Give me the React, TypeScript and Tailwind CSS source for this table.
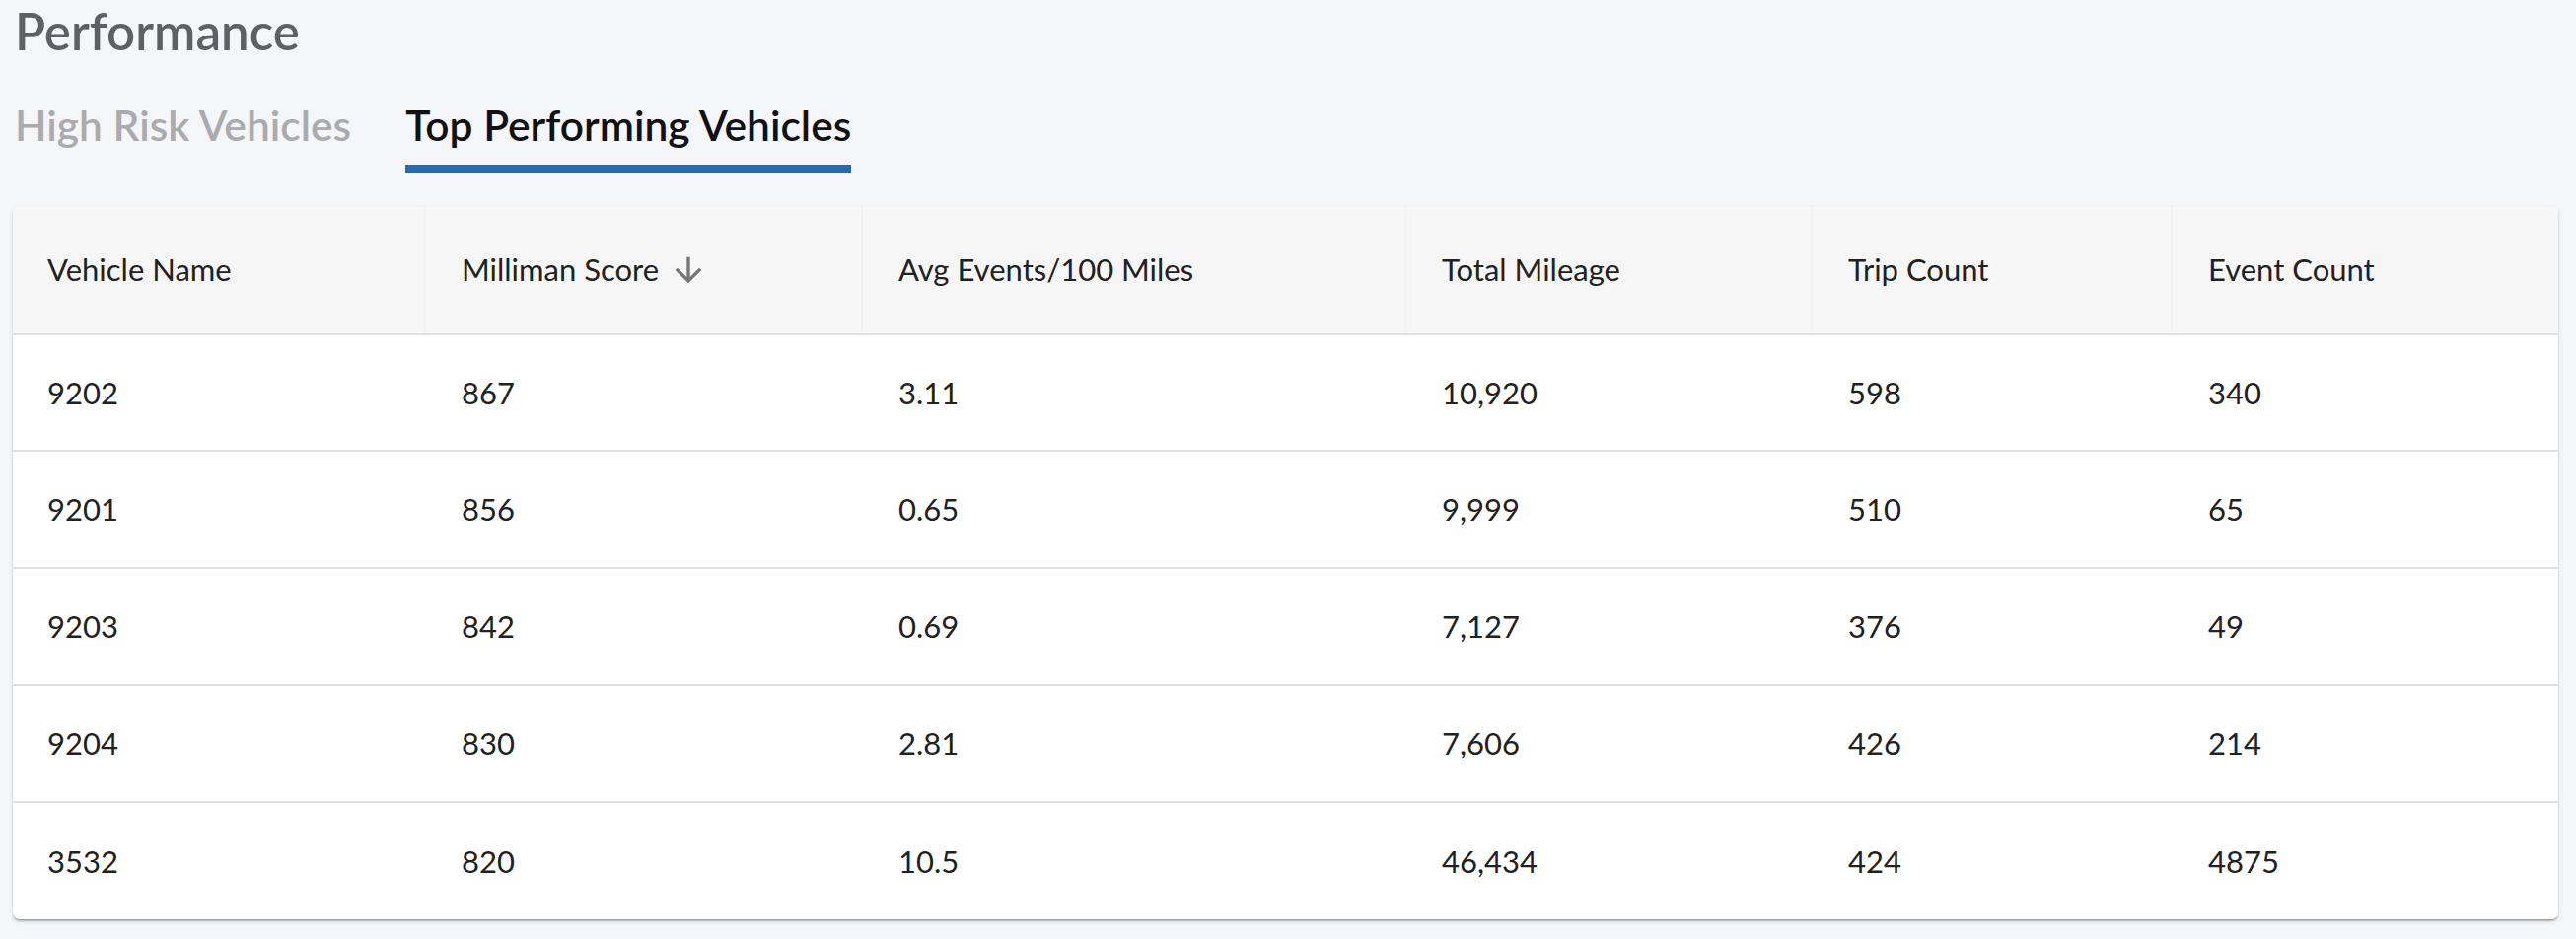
import { useState } from "react";

type Vehicle = {
  name: string;
  score: number;
  avgEvents: string;
  mileage: string;
  trips: number;
  events: number;
};

const vehicles: Vehicle[] = [
  { name: "9202", score: 867, avgEvents: "3.11", mileage: "10,920", trips: 598, events: 340 },
  { name: "9201", score: 856, avgEvents: "0.65", mileage: "9,999", trips: 510, events: 65 },
  { name: "9203", score: 842, avgEvents: "0.69", mileage: "7,127", trips: 376, events: 49 },
  { name: "9204", score: 830, avgEvents: "2.81", mileage: "7,606", trips: 426, events: 214 },
  { name: "3532", score: 820, avgEvents: "10.5", mileage: "46,434", trips: 424, events: 4875 },
];

const columns = [
  "Vehicle Name",
  "Milliman Score",
  "Avg Events/100 Miles",
  "Total Mileage",
  "Trip Count",
  "Event Count",
];

const gridCols = "grid grid-cols-[417px_443px_551px_412px_365px_1fr]";

// material "arrow_downward"
const SortArrow = () => (
  <svg viewBox="0 0 24 24" className="h-[40px] w-[40px] ml-[10px] shrink-0" fill="#757575">
    <path d="M20 12l-1.41-1.41L13 16.17V4h-2v12.17l-5.58-5.59L4 12l8 8 8-8z" />
  </svg>
);

const Tab = ({ label, active, onClick }: { label: string; active: boolean; onClick: () => void }) => (
  <button onClick={onClick} className="flex flex-col items-stretch cursor-pointer">
    <span
      className={`text-[42.5px] leading-[48px] font-semibold whitespace-nowrap ${
        active ? "text-[#111111]" : "text-[#aaabae]"
      }`}
    >
      {label}
    </span>
    <div className={`h-[8px] mt-[16px] ${active ? "bg-[#2b69ad]" : "bg-transparent"}`} />
  </button>
);

export default function App() {
  const [tab, setTab] = useState("top");

  return (
    <div className="min-h-screen bg-[#f5f6fa] pl-[13px] pr-[18px] font-['Lato',sans-serif]">
      <h1 className="pt-[2px] pl-[2px] text-[51px] leading-[60px] font-semibold text-[#5f6066]">
        Performance
      </h1>

      <div className="flex gap-[55px] mt-[41px] pl-[2px]">
        <Tab label="High Risk Vehicles" active={tab === "high"} onClick={() => setTab("high")} />
        <Tab label="Top Performing Vehicles" active={tab === "top"} onClick={() => setTab("top")} />
      </div>

      <div className="mt-[34px] bg-white rounded-[7px] overflow-hidden shadow-[0_3px_2px_-2px_rgba(0,0,0,0.25),0_2px_2px_0_rgba(0,0,0,0.14),0_2px_5px_0_rgba(0,0,0,0.1)]">
        <div className={`${gridCols} h-[131px] bg-[#f6f6f6] border-b-2 border-[#e0e0e0]`}>
          {columns.map((col, i) => (
            <div
              key={col}
              className={`flex items-center text-[31px] text-[#212121] ${
                i === 0 ? "pl-[35px]" : "pl-[36px] border-l-2 border-[#f2f2f2]"
              }`}
            >
              <span className="whitespace-nowrap">{col}</span>
              {i === 1 && <SortArrow />}
            </div>
          ))}
        </div>

        {vehicles.map((v, r) => (
          <div
            key={v.name}
            className={`${gridCols} h-[118.4px] text-[31px] text-[#212121] ${
              r < vehicles.length - 1 ? "border-b-2 border-[#e0e0e0]" : ""
            }`}
          >
            <div className="flex items-center pl-[35px]">{v.name}</div>
            <div className="flex items-center pl-[38px]">{v.score}</div>
            <div className="flex items-center pl-[38px]">{v.avgEvents}</div>
            <div className="flex items-center pl-[38px]">{v.mileage}</div>
            <div className="flex items-center pl-[38px]">{v.trips}</div>
            <div className="flex items-center pl-[38px]">{v.events}</div>
          </div>
        ))}
      </div>
    </div>
  );
}
